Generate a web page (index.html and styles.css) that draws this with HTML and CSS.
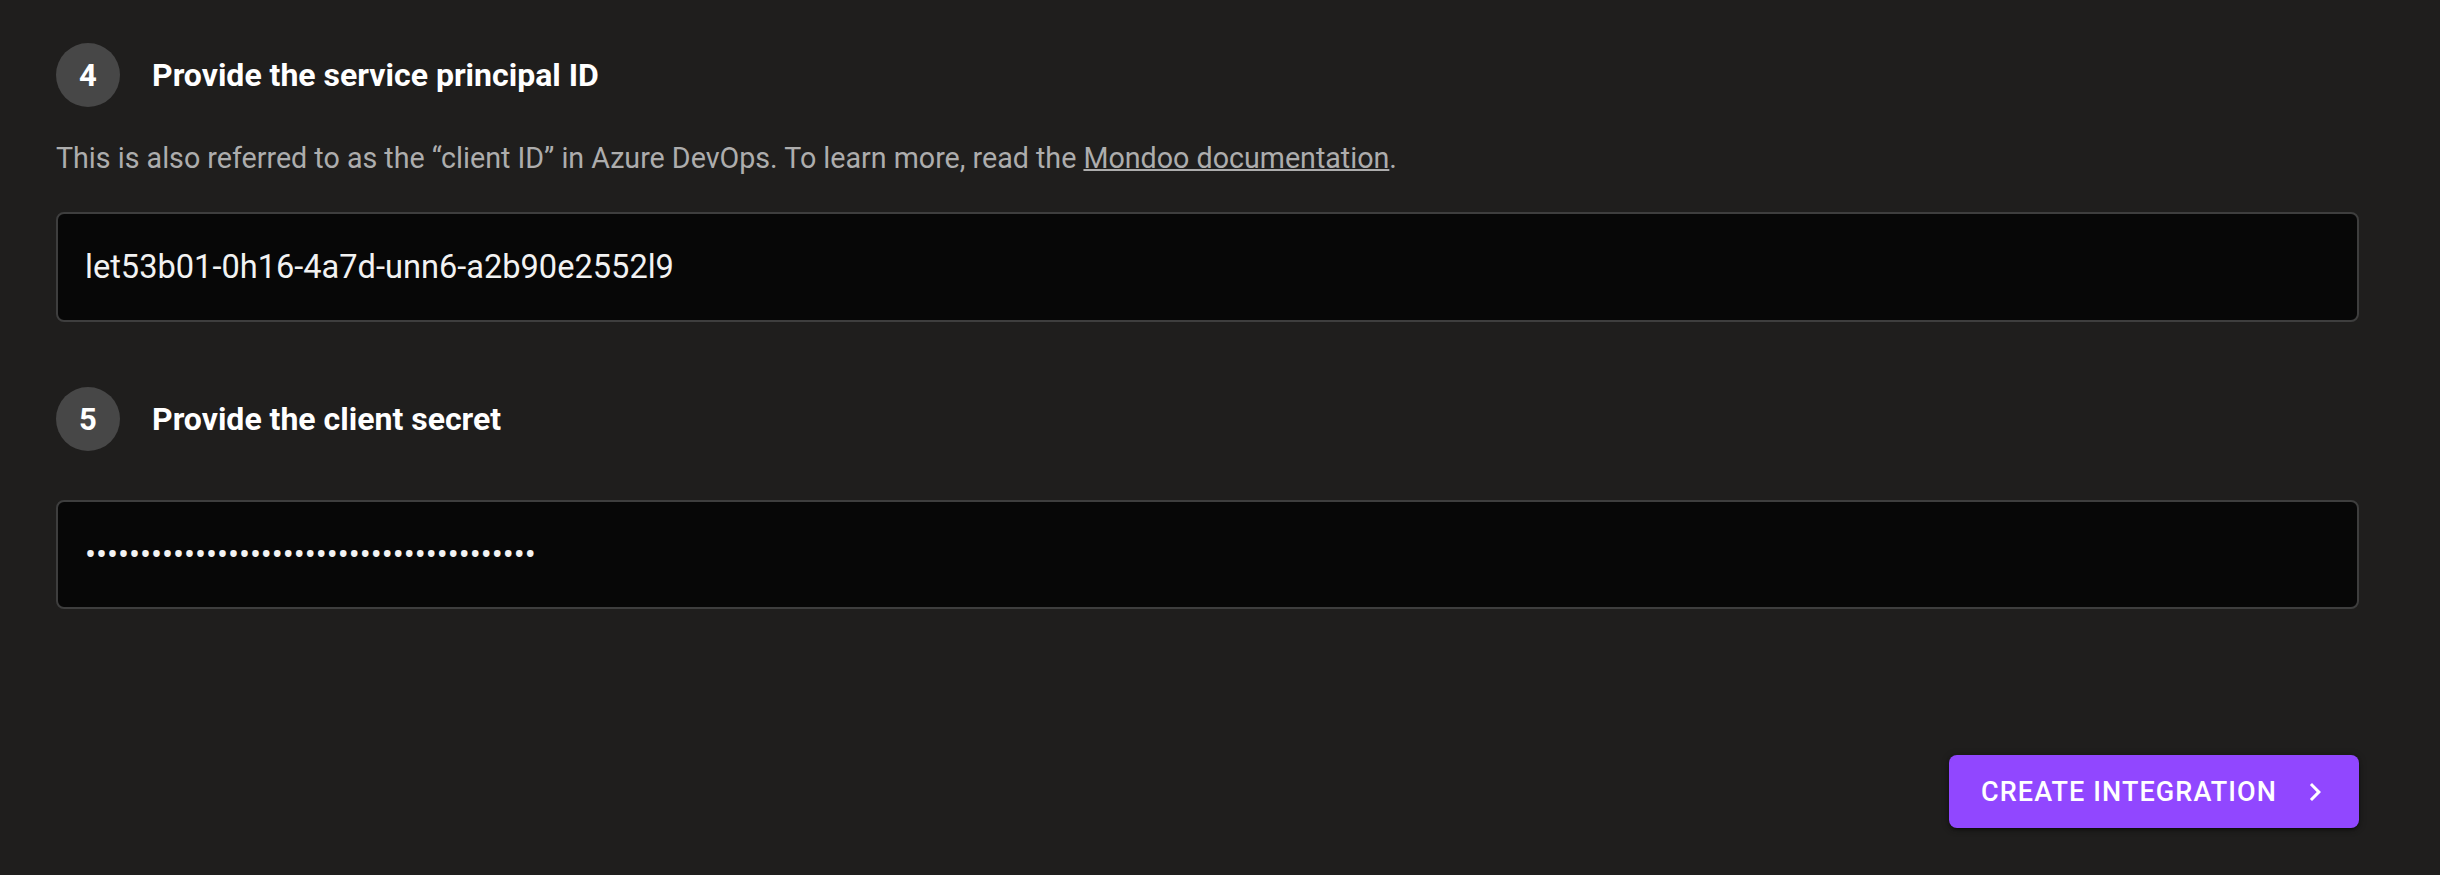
FILE: index.html
```html
<!DOCTYPE html>
<html lang="en">
<head>
<meta charset="utf-8">
<title>Create integration</title>
<link rel="stylesheet" href="styles.css">
</head>
<body>
<main class="page">
  <section class="step step-id">
    <div class="step-header">
      <span class="step-num">4</span>
      <h2 class="step-title">Provide the service principal ID</h2>
    </div>
    <p class="step-desc">This is also referred to as the “client ID” in Azure DevOps. To learn more, read the <a href="#" class="link">Mondoo documentation</a>.</p>
    <input class="field" type="text" value="let53b01-0h16-4a7d-unn6-a2b90e2552l9" readonly>
  </section>
  <section class="step step-secret">
    <div class="step-header">
      <span class="step-num">5</span>
      <h2 class="step-title">Provide the client secret</h2>
    </div>
    <input class="field field-secret" type="password" value="abcdefghijklmnopqrstuvwxyzabcdefghijklmno" readonly>
  </section>
  <div class="actions">
    <button class="btn-primary" type="button">
      <span class="btn-label">Create integration</span>
      <svg class="btn-icon" viewBox="0 0 24 24" aria-hidden="true"><path d="M10 6 8.59 7.41 13.17 12l-4.58 4.59L10 18l6-6z" fill="currentColor"/></svg>
    </button>
  </div>
</main>
</body>
</html>
```

FILE: styles.css
```css
* { box-sizing: border-box; }
html, body { margin: 0; padding: 0; }
body {
  background: #1f1e1d;
  color: #ffffff;
  font-family: Roboto, "Liberation Sans", sans-serif;
  width: 2440px;
  height: 875px;
  overflow: hidden;
}
.page {
  padding: 43px 81px 0 56px;
  display: flex;
  flex-direction: column;
}
.step-header {
  display: flex;
  align-items: center;
  gap: 32px;
}
.step-num {
  width: 64px;
  height: 64px;
  border-radius: 50%;
  background: #474747;
  color: #fff;
  display: flex;
  align-items: center;
  justify-content: center;
  font-size: 31px;
  font-weight: 700;
}
.step-title {
  margin: 0;
  font-size: 32px;
  font-weight: 700;
  color: #fff;
}
.step-desc {
  margin: 30px 0 33px;
  font-size: 28.65px;
  line-height: 42px;
  color: #adadad;
}
.link {
  color: #adadad;
  text-decoration: underline;
  text-decoration-thickness: 2px;
}
.field {
  display: block;
  width: 100%;
  height: 110px;
  padding: 0 27px;
  background: #070707;
  border: 2px solid #3e3e3e;
  border-radius: 8px;
  color: #f2f2f2;
  font-family: Roboto, "Liberation Sans", sans-serif;
  font-size: 32.6px;
  outline: none;
}
.step-secret { margin-top: 65px; }
.step-secret .step-header { margin-bottom: 49px; }
.field-secret { height: 109px; }
.actions {
  display: flex;
  justify-content: flex-end;
  margin-top: 146px;
}
.btn-primary {
  display: flex;
  align-items: center;
  gap: 20px;
  height: 73px;
  padding: 0 26px 0 32px;
  background: #9147ff;
  color: #fff;
  border: none;
  border-radius: 8px;
  box-shadow: 0 3px 2px -2px rgba(0,0,0,0.35), 0 2px 4px rgba(0,0,0,0.3), 0 1px 8px rgba(0,0,0,0.2);
  font-family: Roboto, "Liberation Sans", sans-serif;
  font-size: 27px;
  font-weight: 500;
  letter-spacing: 1.1px;
  text-transform: uppercase;
  cursor: pointer;
}
.btn-icon {
  width: 36px;
  height: 36px;
  display: block;
}
```
